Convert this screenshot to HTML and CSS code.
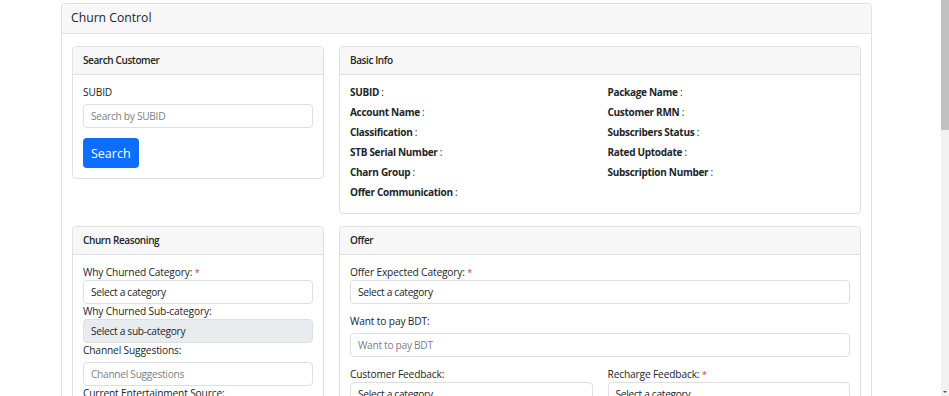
FILE: index.html
```html
<!DOCTYPE html>
<html lang="en">
<head>
    <meta charset="UTF-8">
    <meta name="viewport" content="width=device-width, initial-scale=1.0">
    <title>Churn Control</title>
    <link rel="stylesheet" href="styles.css">
</head>
<body>
    <div class="panel">
        <div class="panel-header">Churn Control</div>
        <div class="panel-body">

            <div class="row">
                <div class="card">
                    <div class="card-header">Search Customer</div>
                    <div class="card-body">
                        <label class="label-block">SUBID</label>
                        <input type="text" class="input tall" placeholder="Search by SUBID">
                        <button class="button">Search</button>
                    </div>
                </div>

                <div class="card">
                    <div class="card-header">Basic Info</div>
                    <div class="card-body info-grid">
                        <div class="info"><b>SUBID</b> :</div>
                        <div class="info"><b>Package Name</b> :</div>
                        <div class="info"><b>Account Name</b> :</div>
                        <div class="info"><b>Customer RMN</b> :</div>
                        <div class="info"><b>Classification</b> :</div>
                        <div class="info"><b>Subscribers Status</b> :</div>
                        <div class="info"><b>STB Serial Number</b> :</div>
                        <div class="info"><b>Rated Uptodate</b> :</div>
                        <div class="info"><b>Charn Group</b> :</div>
                        <div class="info"><b>Subscription Number</b> :</div>
                        <div class="info"><b>Offer Communication</b> :</div>
                    </div>
                </div>
            </div>

            <div class="row">
                <div class="card">
                    <div class="card-header">Churn Reasoning</div>
                    <div class="card-body">
                        <label>Why Churned Category: <span class="req">*</span></label>
                        <select class="input select">
                            <option>Select a category</option>
                        </select>
                        <label>Why Churned Sub-category:</label>
                        <select class="input select" disabled>
                            <option>Select a sub-category</option>
                        </select>
                        <label>Channel Suggestions:</label>
                        <input type="text" class="input spaced" placeholder="Channel Suggestions">
                        <label>Current Entertainment Source:</label>
                        <select class="input select">
                            <option>Select a source</option>
                        </select>
                        <label>Remarks:</label>
                        <textarea class="input area" placeholder="Remarks"></textarea>
                    </div>
                </div>

                <div class="card">
                    <div class="card-header">Offer</div>
                    <div class="card-body">
                        <div class="group">
                            <label>Offer Expected Category: <span class="req">*</span></label>
                            <select class="input select">
                                <option>Select a category</option>
                            </select>
                        </div>
                        <div class="group">
                            <label>Want to pay BDT:</label>
                            <input type="text" class="input spaced" placeholder="Want to pay BDT">
                        </div>
                        <div class="group pair">
                            <div>
                                <label>Customer Feedback:</label>
                                <select class="input select">
                                    <option>Select a category</option>
                                </select>
                            </div>
                            <div>
                                <label>Recharge Feedback: <span class="req">*</span></label>
                                <select class="input select">
                                    <option>Select a category</option>
                                </select>
                            </div>
                        </div>
                        <div class="group">
                            <label>Offer Given:</label>
                            <input type="text" class="input spaced" placeholder="Offer Given">
                        </div>
                        <div class="group">
                            <label>Comments:</label>
                            <textarea class="input area" placeholder="Comments"></textarea>
                        </div>
                        <button class="button">Submit</button>
                    </div>
                </div>
            </div>

        </div>
    </div>

    <!-- window scrollbar -->
    <div class="scrollbar">
        <div class="scroll-thumb"></div>
        <div class="scroll-arrow"></div>
    </div>
</body>
</html>
```

FILE: styles.css
```css
body {
    margin: 0;
    padding: 0;
    font-family: "Open Sans", Arial, sans-serif;
    font-size: 10.2px;
    letter-spacing: -0.15px;
    color: #212529;
    background: #fff;
}

.scrollbar {
    position: fixed;
    top: 0;
    right: 0;
    width: 8px;
    height: 100vh;
    background: #f1f1f1;
}

.scroll-thumb {
    height: 130px;
    background: #c1c1c1;
}

.scroll-arrow {
    position: absolute;
    bottom: 3px;
    left: 2px;
    width: 0;
    height: 0;
    border-left: 2px solid transparent;
    border-right: 2px solid transparent;
    border-top: 2px solid #505050;
}

.panel {
    width: 811px;
    margin: 3px 0 40px 61px;
    border: 1px solid #e0e0e0;
    border-radius: 4px;
    box-sizing: border-box;
}

.panel-header {
    background: #f7f7f7;
    border-bottom: 1px solid #e0e0e0;
    border-radius: 4px 4px 0 0;
    height: 30px;
    line-height: 27px;
    padding: 0 9px;
    font-size: 12.2px;
    letter-spacing: 0;
    box-sizing: border-box;
}

.panel-body {
    padding: 12px 10px 14px 10px;
}

.row {
    display: grid;
    grid-template-columns: 252px 1fr;
    gap: 15px;
    align-items: start;
}

.row + .row {
    margin-top: 12px;
}

.card {
    border: 1px solid #e0e0e0;
    border-radius: 4px;
}

.card-header {
    background: #f7f7f7;
    border-bottom: 1px solid #e0e0e0;
    border-radius: 4px 4px 0 0;
    height: 28px;
    line-height: 26px;
    padding: 0 10px;
    font-weight: 600;
    font-size: 10px;
    letter-spacing: -0.4px;
    box-sizing: border-box;
}

.card-body {
    padding: 10px;
}

label {
    display: block;
    line-height: 15px;
}

.label-block {
    margin-bottom: 4px;
}

.req {
    color: #dc3545;
    font-size: 9px;
}

.input {
    display: block;
    width: 100%;
    box-sizing: border-box;
    height: 24px;
    padding: 0 7px;
    border: 1px solid #dcdfe3;
    border-radius: 4px;
    background: #fff;
    font-family: inherit;
    font-size: 10.2px;
    letter-spacing: -0.3px;
    color: #212529;
    outline: none;
}

.input::placeholder {
    color: #7a7f85;
}

.select {
    appearance: none;
    -webkit-appearance: none;
}

.select:disabled {
    background: #e9ecef;
    opacity: 1;
}

.spaced {
    margin-top: 4px;
}

.area {
    height: 60px;
    padding-top: 5px;
    resize: none;
}

.group {
    margin-bottom: 10px;
}

.pair {
    display: grid;
    grid-template-columns: 1fr 1fr;
    gap: 15px;
}

.info-grid {
    display: grid;
    grid-template-columns: 1fr 1fr;
    column-gap: 15px;
    padding-bottom: 8px;
}

.info {
    line-height: 14px;
    margin-bottom: 6px;
    font-size: 10px;
    letter-spacing: -0.3px;
}

.info b {
    font-weight: 700;
}

.button {
    display: inline-block;
    margin-top: 10px;
    height: 30px;
    padding: 0 8px;
    border: none;
    border-radius: 4px;
    background: #0d6efd;
    color: white;
    font-family: inherit;
    font-size: 12.5px;
    letter-spacing: 0;
    cursor: pointer;
}
```
